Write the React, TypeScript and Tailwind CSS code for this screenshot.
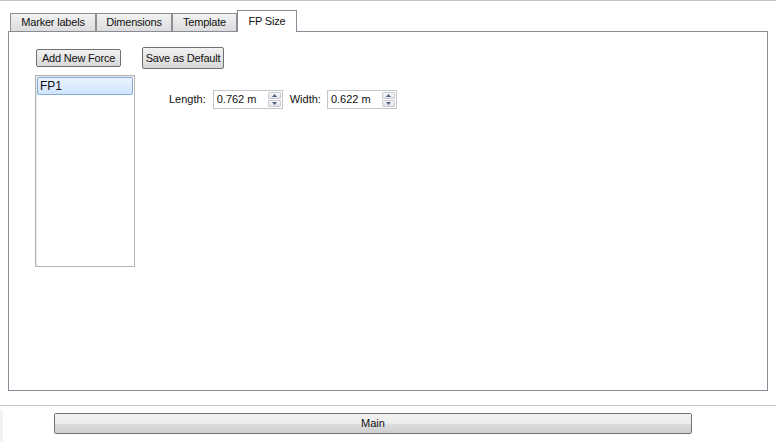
import React from "react";

function Tab({ label, w, selected }: { label: string; w: number; selected?: boolean }) {
  if (selected) {
    return (
      <div
        className="relative z-10 flex h-[22px] items-start justify-center border border-b-0 border-[#898c95] bg-white pt-[2px] text-[11px] tracking-[-0.2px] text-[#111]"
        style={{ width: w }}
      >
        {label}
      </div>
    );
  }
  return (
    <div
      className="mt-[3px] flex h-[18px] items-center justify-center border border-b-0 border-[#8c8e94] bg-gradient-to-b from-[#f2f2f2] to-[#dcdcdc] text-[11px] tracking-[-0.2px] text-[#111]"
      style={{ width: w }}
    >
      {label}
    </div>
  );
}

function Spin({ value }: { value: string }) {
  return (
    <div className="flex h-[19px] w-[70px] items-center border border-[#c4c6cc] bg-white">
      <span className="flex-1 pl-[3px] text-[11px] leading-none text-[#111]">{value}</span>
      <div className="mr-[1px] flex h-[15px] w-[13px] flex-col gap-px">
        <div className="flex flex-1 items-center justify-center rounded-[1px] border border-[#c8cbd2] bg-gradient-to-b from-[#f6f6f6] to-[#e2e4ea]">
          <svg width="5" height="3" viewBox="0 0 5 3">
            <path d="M0 3 L2.5 0 L5 3 Z" fill="#4f5f82" />
          </svg>
        </div>
        <div className="flex flex-1 items-center justify-center rounded-[1px] border border-[#c8cbd2] bg-gradient-to-b from-[#f6f6f6] to-[#e2e4ea]">
          <svg width="5" height="3" viewBox="0 0 5 3">
            <path d="M0 0 L2.5 3 L5 0 Z" fill="#4f5f82" />
          </svg>
        </div>
      </div>
    </div>
  );
}

export default function App() {
  return (
    <div
      className="flex h-[442px] w-[776px] flex-col overflow-hidden border-t border-[#c3c3c3] bg-white text-[11px] text-[#111]"
      style={{ fontFamily: '"Liberation Sans", Arial, sans-serif' }}
    >
      {/* Tabs */}
      <div className="mt-[9px] flex pl-[10px]">
        <Tab label="Marker labels" w={86} />
        <Tab label="Dimensions" w={76} />
        <Tab label="Template" w={65} />
        <Tab label="FP Size" w={60} selected />
      </div>
      {/* Pane */}
      <div className="-mt-px ml-[8px] h-[360px] w-[760px] border border-[#898c95] bg-white">
        <div className="flex items-center pt-[15px]">
          <button className="ml-[27px] flex h-[18px] w-[85px] items-center justify-center rounded-[2px] border border-[#707070] bg-gradient-to-b from-[#f2f2f2] to-[#d8d8d8] text-[11px] tracking-[-0.2px] text-[#111]">
            Add New Force
          </button>
          <button className="ml-[21px] flex h-[22px] w-[82px] items-center justify-center rounded-[2px] border border-[#707070] bg-gradient-to-b from-[#f2f2f2] to-[#d8d8d8] text-[11px] tracking-[-0.2px] text-[#111]">
            Save as Default
          </button>
        </div>
        <div className="mt-[6px] flex">
          <div className="ml-[26px] h-[192px] w-[100px] border border-[#b5b5b5] bg-white p-px shadow-[inset_1px_1px_0_#e6e6e6]">
            <div className="flex h-[18px] items-center rounded-[2px] border border-[#84acdd] bg-gradient-to-b from-[#eaf3fd] to-[#cfe4fa] pl-[2px] text-[12px] text-[#111]">
              FP1
            </div>
          </div>
          <div className="ml-[34px] mt-[15px] flex h-[19px] items-center">
            <span className="mr-[7px]">Length:</span>
            <Spin value="0.762 m" />
            <span className="ml-[7px] mr-[6px]">Width:</span>
            <Spin value="0.622 m" />
          </div>
        </div>
      </div>
      {/* Separator */}
      <div className="mt-[14px] h-px w-full bg-[#c8c8c8]" />
      {/* Bottom */}
      <div className="flex flex-1">
        <div className="mt-[3px] w-[3px] bg-[#f3f3f3]" />
        <div className="flex flex-1 pl-[51px] pt-[7px]">
          <button className="relative h-[21px] w-[638px] overflow-hidden rounded-[2px] border border-[#707070] text-[11px] text-[#111]">
            <div className="absolute inset-0 flex flex-col">
              <div className="h-1/2 bg-gradient-to-b from-[#f2f2f2] to-[#ebebeb]" />
              <div className="h-1/2 bg-gradient-to-b from-[#dddddd] to-[#cfcfcf]" />
            </div>
            <span className="relative">Main</span>
          </button>
        </div>
      </div>
    </div>
  );
}
